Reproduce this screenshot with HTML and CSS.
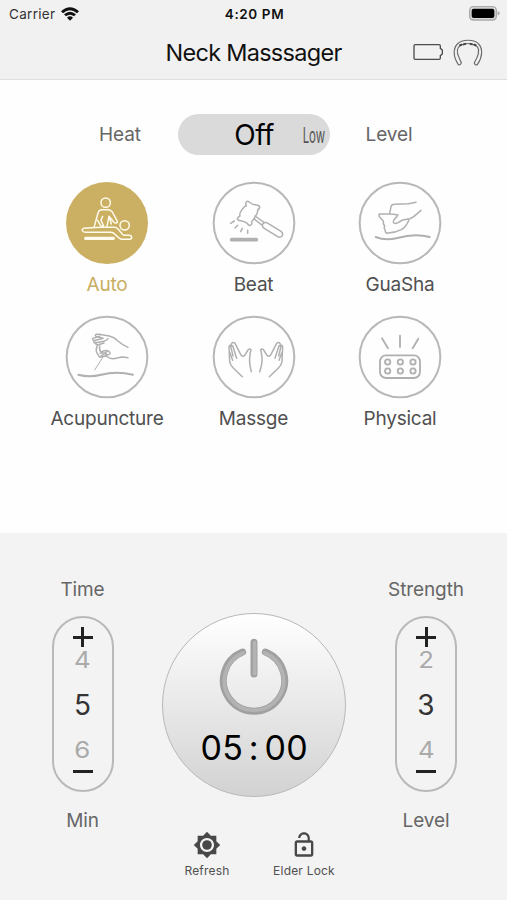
FILE: index.html
```html
<!DOCTYPE html>
<html lang="en">
<head>
	<meta charset="utf-8">
	<title>Neck Masssager</title>
	<meta name="viewport" content="width=device-width">
	<link rel="stylesheet" href="styles.css">
</head>
<body>
	<header>
		<div class="status">
			<div class="carrier">
				<span>Carrier</span>
				<svg width="18" height="14" viewBox="0 0 54 42">
					<path d="M0 13Q27-11 54 13L48 19Q27 1 6 19ZM9 22Q27 7 45 22L39 28Q27 18 15 28ZM18 32Q27 24 36 32L27 41Z"/>
				</svg>
			</div>
			<span class="clock">4:20 PM</span>
			<svg class="power" width="31" height="15" viewBox="0 0 93 45">
				<rect x="2" y="2" width="80" height="40" rx="11" fill="#dadada" stroke="#aaa" stroke-width="4"/>
				<rect x="8" y="8" width="68" height="28" rx="6"/>
				<path d="M86 15Q92 18 92 22T86 29Z" fill="#aaa"/>
			</svg>
		</div>
		<div class="navbar">
			<h1>Neck Masssager</h1>
			<div class="devices">
				<svg width="30" height="18" viewBox="0 0 90 54" fill="none" stroke="#4c4c4c" stroke-width="4">
					<path d="M7 5H78Q82 5 82 9V16L88 21V33L82 38V45Q82 49 78 49H7Q3 49 3 45V9Q3 5 7 5Z"/>
				</svg>
				<svg width="30" height="28" viewBox="598 113 90 84" fill="none" stroke="#6a6a6a" stroke-width="3.5">
					<path d="M614 193C598 169 598 145 611 131C624 116 663 116 675 131C688 145 687 170 671 193Q664 196 662 188Q665 181 669 174C678 155 677 142 666 135Q642 124 621 135C608 143 609 158 617 174L623 187Q621 195 614 193Z"/>
					<path d="M617 136L625 132M628 133L637 130M648 130L657 133M660 132L668 136" stroke="#444" stroke-width="6"/>
				</svg>
			</div>
		</div>
	</header>

	<main>
		<div class="heat">
			<span>Heat</span>
			<div class="heat-picker">
				<span class="heat-on">Off</span>
				<span class="heat-next">Low</span>
			</div>
			<span>Level</span>
		</div>

		<div class="modes">
			<div class="mode active">
				<svg viewBox="45 33 252 252">
					<circle cx="171" cy="159" r="123"/>
					<g class="lines">
						<circle cx="167" cy="98" r="14"/>
						<circle cx="224" cy="166" r="14"/>
						<path d="M132 172L145 126Q148 119 156 119H175Q182 119 187 126L201 152Q204 158 199 159Q195 160 191 156L177 139L171 169M158 139L153 151L161 168Q157 172 150 164L143 151M177 139L184 162"/>
						<path d="M101 175Q94 178 98 183Q100 187 108 187H182Q190 187 195 193L207 204Q211 208 218 208H239Q246 207 245 201Q244 196 237 196H224Q219 196 215 190L204 177Q200 172 192 172H151Z"/>
						<path d="M107 205H190" stroke-width="10"/>
					</g>
				</svg>
				<span>Auto</span>
			</div>
			<div class="mode">
				<svg viewBox="50 31 252 252">
					<circle cx="176" cy="157" r="121"/>
					<g class="lines">
						<path d="M152 96Q157 89 161 94Q171 102 183 103Q192 104 193 109Q194 114 187 117Q189 124 181 136Q175 149 169 152Q172 161 165 164Q160 166 156 158Q147 151 136 150Q126 149 126 144Q127 139 134 136Q131 129 140 117Q147 106 153 105Q150 100 152 96Z"/>
						<path d="M179 136L207 156M175 144L201 164M207 156Q202 157 201 164Q201 171 208 174L247 198Q255 202 260 196Q265 188 257 182L218 158Q212 154 207 156Z"/>
						<path d="M117 151L106 158M127 164L119 172M141 173L136 183M157 179V188"/>
						<path d="M109 207H183" stroke-width="11"/>
					</g>
				</svg>
				<span>Beat</span>
			</div>
			<div class="mode">
				<svg viewBox="54 31 252 252">
					<circle cx="180" cy="157" r="121"/>
					<g class="lines">
						<path d="M149 129L153 108Q155 101 163 101L205 99L228 95M243 119L222 137Q216 142 209 144L188 148L174 156Q164 161 160 155Q158 150 165 144L174 133Q160 130 149 130H119Q115 132 118 138L130 151Q128 158 134 166Q131 171 135 178L137 185Q139 189 144 187Q167 186 184 177Q199 168 207 147"/>
						<path d="M107 199Q136 211 172 202Q225 187 269 199" stroke-width="6"/>
					</g>
				</svg>
				<span>GuaSha</span>
			</div>
			<div class="mode">
				<svg viewBox="60 28 252 252">
					<circle cx="186" cy="154" r="121"/>
					<g class="lines">
						<path d="M249 125Q232 118 219 106Q207 94 193 91L162 86Q151 84 151 89Q152 93 159 94L174 98M164 92L149 96Q140 98 144 103Q147 106 154 103L171 99M155 103L148 106Q144 110 149 112L176 107Q185 105 189 99M153 113Q151 118 160 117L177 112"/>
						<path d="M157 120Q149 136 160 148Q163 158 170 153L183 151Q193 159 205 159Q218 157 229 154Q240 155 249 156M164 121Q162 133 168 139M169 140Q177 132 190 136Q200 143 192 147L181 148M165 143Q178 138 186 146M168 151Q178 144 186 137"/>
						<path d="M176 151L149 193" stroke-width="3"/>
						<path d="M100 207Q132 216 169 207Q214 196 264 207" stroke-width="6"/>
					</g>
				</svg>
				<span>Acupuncture</span>
			</div>
			<div class="mode">
				<svg viewBox="50 28 252 252">
					<circle cx="176" cy="154" r="121"/>
					<g class="lines">
						<path d="M141 213L113 186Q105 179 103 168L101 123Q103 115 109 121L108 115Q112 107 119 113L136 146Q141 156 148 149L158 133Q162 127 167 132Q164 141 163 156Q161 171 168 198M106 122L113 151M112 120L124 158M103 140L112 164"/>
						<path d="M222 213L250 186Q258 179 260 168L262 123Q260 115 254 121L255 115Q251 107 244 113L227 146Q222 156 215 149L205 133Q201 127 196 132Q199 141 200 156Q202 171 193 198M257 122L250 151M251 120L239 158M260 140L251 164"/>
					</g>
				</svg>
				<span>Massge</span>
			</div>
			<div class="mode">
				<svg viewBox="55 28 252 252">
					<circle cx="181" cy="154" r="121"/>
					<g class="lines beads">
						<path d="M127 98L145 128M181 90V124M236 99L219 128"/>
						<rect x="121" y="149" width="120" height="68" rx="18"/>
						<circle cx="144" cy="169" r="8"/>
						<circle cx="182" cy="169" r="8"/>
						<circle cx="220" cy="169" r="8"/>
						<circle cx="144" cy="196" r="8"/>
						<circle cx="182" cy="196" r="8"/>
						<circle cx="220" cy="196" r="8"/>
					</g>
				</svg>
				<span>Physical</span>
			</div>
		</div>
	</main>

	<footer>
		<div class="controls">
			<div class="control">
				<span class="caption">Time</span>
				<div class="wheel">
					<i class="plus"></i>
					<span class="near">4</span>
					<span class="value">5</span>
					<span class="near">6</span>
					<i class="minus"></i>
				</div>
				<span class="caption">Min</span>
			</div>
			<div class="start">
				<svg width="70" height="78" viewBox="0 0 210 234" fill="none" stroke-linecap="round">
					<g stroke="#a0a0a0" stroke-width="21">
						<path d="M71 42A92 92 0 1 0 139 42M105 13V108"/>
					</g>
					<g stroke="#b3b3b3" stroke-width="11">
						<path d="M73 45A89 89 0 1 0 137 45M107 14V107"/>
					</g>
				</svg>
				<span class="timer">05 : 00</span>
			</div>
			<div class="control">
				<span class="caption">Strength</span>
				<div class="wheel">
					<i class="plus"></i>
					<span class="near">2</span>
					<span class="value">3</span>
					<span class="near">4</span>
					<i class="minus"></i>
				</div>
				<span class="caption">Level</span>
			</div>
		</div>
		<div class="actions">
			<div class="action">
				<svg width="28" height="28" viewBox="0 0 24 24" fill="#484848">
					<path fill-rule="evenodd" d="M20 8.69V4h-4.69L12 .69 8.69 4H4v4.69L.69 12 4 15.31V20h4.69L12 23.31 15.31 20H20v-4.69L23.31 12 20 8.69zM12 18c-3.31 0-6-2.69-6-6s2.69-6 6-6 6 2.69 6 6-2.69 6-6 6z"/>
					<circle cx="12" cy="12" r="4.1"/>
				</svg>
				<span>Refresh</span>
			</div>
			<div class="action">
				<svg width="28" height="28" viewBox="0 0 24 24" fill="#484848">
					<path d="M12 17c1.1 0 2-.9 2-2s-.9-2-2-2-2 .9-2 2 .9 2 2 2zm6-9h-1V6c0-2.76-2.24-5-5-5S7 3.24 7 6h1.9c0-1.71 1.39-3.1 3.1-3.1s3.1 1.39 3.1 3.1v2H6c-1.1 0-2 .9-2 2v10c0 1.1.9 2 2 2h12c1.1 0 2-.9 2-2V10c0-1.1-.9-2-2-2zm0 12H6V10h12v10z"/>
				</svg>
				<span>Elder Lock</span>
			</div>
		</div>
	</footer>
</body>
</html>
```

FILE: styles.css
```css
* {
	box-sizing: border-box;
}
body {
	margin: 0;
	height: 900px;
	display: flex;
	flex-direction: column;
	font-family: Inter, "Liberation Sans", sans-serif;
	color: #505050;
	background: #fefefe;
	overflow: hidden;
}
svg {
	display: block;
	flex: none;
}

header {
	height: 80px;
	background: #f1f1f1;
	border-bottom: 1px solid #dedede;
	color: #111;
}
.status {
	display: grid;
	grid-template-columns: 1fr auto 1fr;
	align-items: center;
	height: 27px;
	padding: 0 7px 0 9px;
	font-size: 13.5px;
}
.carrier {
	display: flex;
	align-items: center;
	gap: 6px;
	color: #333;
	letter-spacing: .3px;
}
.carrier svg {
	fill: #111;
}
.clock {
	font-weight: 600;
	letter-spacing: .6px;
}
.power {
	justify-self: end;
}
.navbar {
	display: grid;
	grid-template-columns: 1fr auto 1fr;
	align-items: center;
	height: 50px;
	padding: 0 24px;
}
h1 {
	grid-column: 2;
	margin: 0;
	font-size: 23.5px;
	font-weight: 400;
	letter-spacing: -.72px;
}
.devices {
	display: flex;
	align-items: center;
	justify-content: flex-end;
	gap: 10px;
}

main {
	height: 453px;
	padding-top: 34px;
}
.heat {
	display: grid;
	grid-template-columns: 116px 152px 118px;
	justify-content: center;
	align-items: center;
	padding-left: 3px;
	text-align: center;
	font-size: 19px;
	color: #666;
	letter-spacing: -.1px;
}
.heat-picker {
	display: grid;
	grid-template-columns: 1fr 50px 1fr;
	align-items: center;
	justify-items: center;
	height: 41px;
	border-radius: 21px;
	background: #dadada;
}
.heat-on {
	grid-column: 2;
	font-size: 28px;
	letter-spacing: -.5px;
	color: #000;
}
.heat-next {
	font-size: 22px;
	color: #555;
	transform: scaleX(.52) translateX(18px);
}
.modes {
	display: grid;
	grid-template-columns: repeat(3, 146.5px);
	grid-auto-rows: 134px;
	justify-content: center;
	margin-top: 26px;
}
.mode {
	display: flex;
	flex-direction: column;
	align-items: center;
	gap: 8px;
	font-size: 19px;
	line-height: 24px;
	letter-spacing: -.22px;
}
.mode svg {
	width: 84px;
	height: 84px;
	fill: none;
	stroke: #b8b8b8;
	stroke-width: 6;
}
.mode .lines {
	stroke: #b0b0b0;
	stroke-width: 4.5;
	stroke-linecap: round;
	stroke-linejoin: round;
}
.mode .beads {
	stroke-width: 5.5;
}
.active {
	color: #c9ae62;
}
.active svg > circle {
	fill: #cbb063;
	stroke: none;
}
.active .lines {
	stroke: #fffbed;
}

footer {
	flex: 1;
	padding-top: 44px;
	background: #f3f3f3;
}
.controls {
	display: grid;
	grid-template-columns: 110px 1fr 110px;
	padding: 0 26px 0 27.5px;
}
.control {
	display: flex;
	flex-direction: column;
	align-items: center;
}
.caption {
	font-size: 19px;
	line-height: 26px;
	color: #666;
	letter-spacing: -.1px;
}
.wheel {
	display: flex;
	flex-direction: column;
	align-items: center;
	width: 62px;
	height: 176px;
	margin: 13px 0 16px;
	padding-top: 9px;
	border: 2px solid #b9b9b9;
	border-radius: 31px;
}
.plus,
.minus {
	width: 20px;
	height: 20px;
	background: linear-gradient(#222, #222) center / 20px 3px no-repeat;
}
.plus {
	background: linear-gradient(#222, #222) center / 20px 3px no-repeat, linear-gradient(#222, #222) center / 3px 20px no-repeat;
}
.near {
	margin: 1px 0 -1px;
	font-size: 23px;
	line-height: 24px;
	color: #aaa;
	transform: scaleX(1.12);
}
.value {
	margin: 19px 0 17px;
	font-size: 28px;
	line-height: 30px;
	color: #333;
}
.start {
	display: flex;
	flex-direction: column;
	align-items: center;
	justify-self: center;
	width: 184px;
	height: 184px;
	margin-top: 36px;
	padding-top: 24px;
	border: 1px solid #b8b8b8;
	border-radius: 50%;
	background: linear-gradient(#fff, #d2d2d2);
}
.timer {
	margin-top: 11px;
	font-size: 34px;
	line-height: 42px;
	letter-spacing: .2px;
	word-spacing: -4px;
	color: #000;
}
.actions {
	display: grid;
	grid-template-columns: 97px 97px;
	justify-content: center;
	margin-top: -3px;
	padding-left: 4px;
}
.action {
	display: flex;
	flex-direction: column;
	align-items: center;
	gap: 4px;
	font-size: 12px;
	line-height: 16px;
	letter-spacing: .2px;
}
```
